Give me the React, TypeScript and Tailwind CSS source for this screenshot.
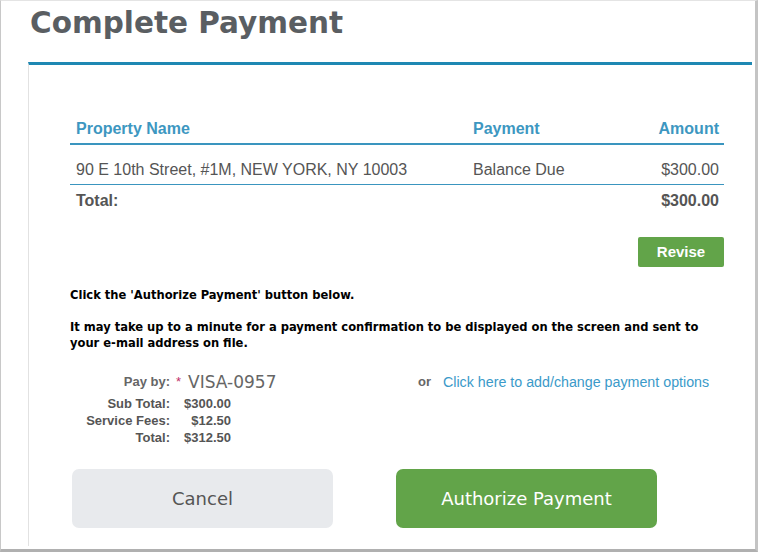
import React from 'react'

const rows = [
  { property: '90 E 10th Street, #1M, NEW YORK, NY 10003', payment: 'Balance Due', amount: '$300.00' },
]

const totals = [
  { label: 'Sub Total:', value: '$300.00' },
  { label: 'Service Fees:', value: '$12.50' },
  { label: 'Total:', value: '$312.50' },
]

function PaymentTable() {
  return (
    <div className="ml-[41px] mt-[54px] w-[654px] font-['Liberation_Sans',Arial,sans-serif] text-[16px]">
      <div className="grid grid-cols-[397px_1fr_auto] border-b-2 border-[#3a95bf] pb-[4px] leading-[20px] font-bold text-[#3d97c1]">
        <div className="pl-[6px]">Property Name</div>
        <div className="pl-[6px]">Payment</div>
        <div className="pr-[5px] text-right">Amount</div>
      </div>
      {rows.map((row) => (
        <div
          key={row.property}
          className="grid grid-cols-[397px_1fr_auto] border-b border-[#3a95bf] pt-[15px] pb-[4px] leading-[20px] text-[#555]"
        >
          <div className="pl-[6px]">{row.property}</div>
          <div className="pl-[6px]">{row.payment}</div>
          <div className="pr-[5px] text-right">{row.amount}</div>
        </div>
      ))}
      <div className="grid grid-cols-[397px_1fr_auto] pt-[6px] leading-[20px] font-bold text-[#555]">
        <div className="pl-[6px]">Total:</div>
        <div></div>
        <div className="pr-[5px] text-right">$300.00</div>
      </div>
      <div className="mt-[26px] flex justify-end">
        <button className="h-[30px] w-[86px] rounded-[2px] bg-[#62a449] text-[15px] font-bold text-white">
          Revise
        </button>
      </div>
    </div>
  )
}

export default function App() {
  return (
    <div className="h-[552px] w-[758px] border-t border-l border-t-[#e4e4e4] border-l-[#c8c8c8] border-r-[3px] border-b-[3px] border-r-[#c4c4c4] border-b-[#b0b0b0] bg-white">
      <h1 className="ml-[29px] pt-[2px] h-[61px] font-['DejaVu_Sans',Verdana,sans-serif] text-[29.5px] font-bold leading-[40px] text-[#5a5e62]">
        Complete Payment
      </h1>
      <div className="ml-[27px] mr-[3px] h-[484px] border-t-[3px] border-l border-t-[#1e88b3] border-l-[#e2e2e2]">
        <PaymentTable />

        <div className="ml-[41px] mt-[20px] font-['DejaVu_Sans',Tahoma,sans-serif] font-stretch-condensed text-[12.8px] font-bold leading-[16px] text-black">
          <p>Click the 'Authorize Payment' button below.</p>
          <p className="mt-[16px]">
            It may take up to a minute for a payment confirmation to be displayed on the screen and sent to
            <br />
            your e-mail address on file.
          </p>
        </div>

        <div className="ml-[41px] mt-[21px] flex items-center font-['Liberation_Sans',Arial,sans-serif] leading-[20px]">
          <div className="flex w-[348px] items-center">
            <span className="w-[100px] text-right text-[13px] font-bold text-[#666]">Pay by:</span>
            <span className="ml-[6px] text-[13px] text-[#c0306a]">*</span>
            <span className="ml-[7px] font-['DejaVu_Sans',Verdana,sans-serif] text-[17px] text-[#666]">VISA-0957</span>
          </div>
          <span className="text-[13px] font-bold text-[#666]">or</span>
          <a className="ml-[12px] text-[14.25px] text-[#3b9ac9]">Click here to add/change payment options</a>
        </div>

        <div className="ml-[41px] mt-[3px] font-['Liberation_Sans',Arial,sans-serif] text-[13px] font-bold leading-[17px] text-[#555]">
          {totals.map((t) => (
            <div key={t.label} className="flex">
              <span className="w-[100px] text-right">{t.label}</span>
              <span className="w-[61px] text-right">{t.value}</span>
            </div>
          ))}
        </div>

        <div className="ml-[43px] mt-[23px] flex gap-[63px] font-['DejaVu_Sans',Tahoma,sans-serif] text-[18px]">
          <button className="h-[59px] w-[261px] rounded-[7px] bg-[#e8eaed] text-[#555]">Cancel</button>
          <button className="h-[59px] w-[261px] rounded-[7px] bg-[#62a449] text-white">Authorize Payment</button>
        </div>
      </div>
    </div>
  )
}
